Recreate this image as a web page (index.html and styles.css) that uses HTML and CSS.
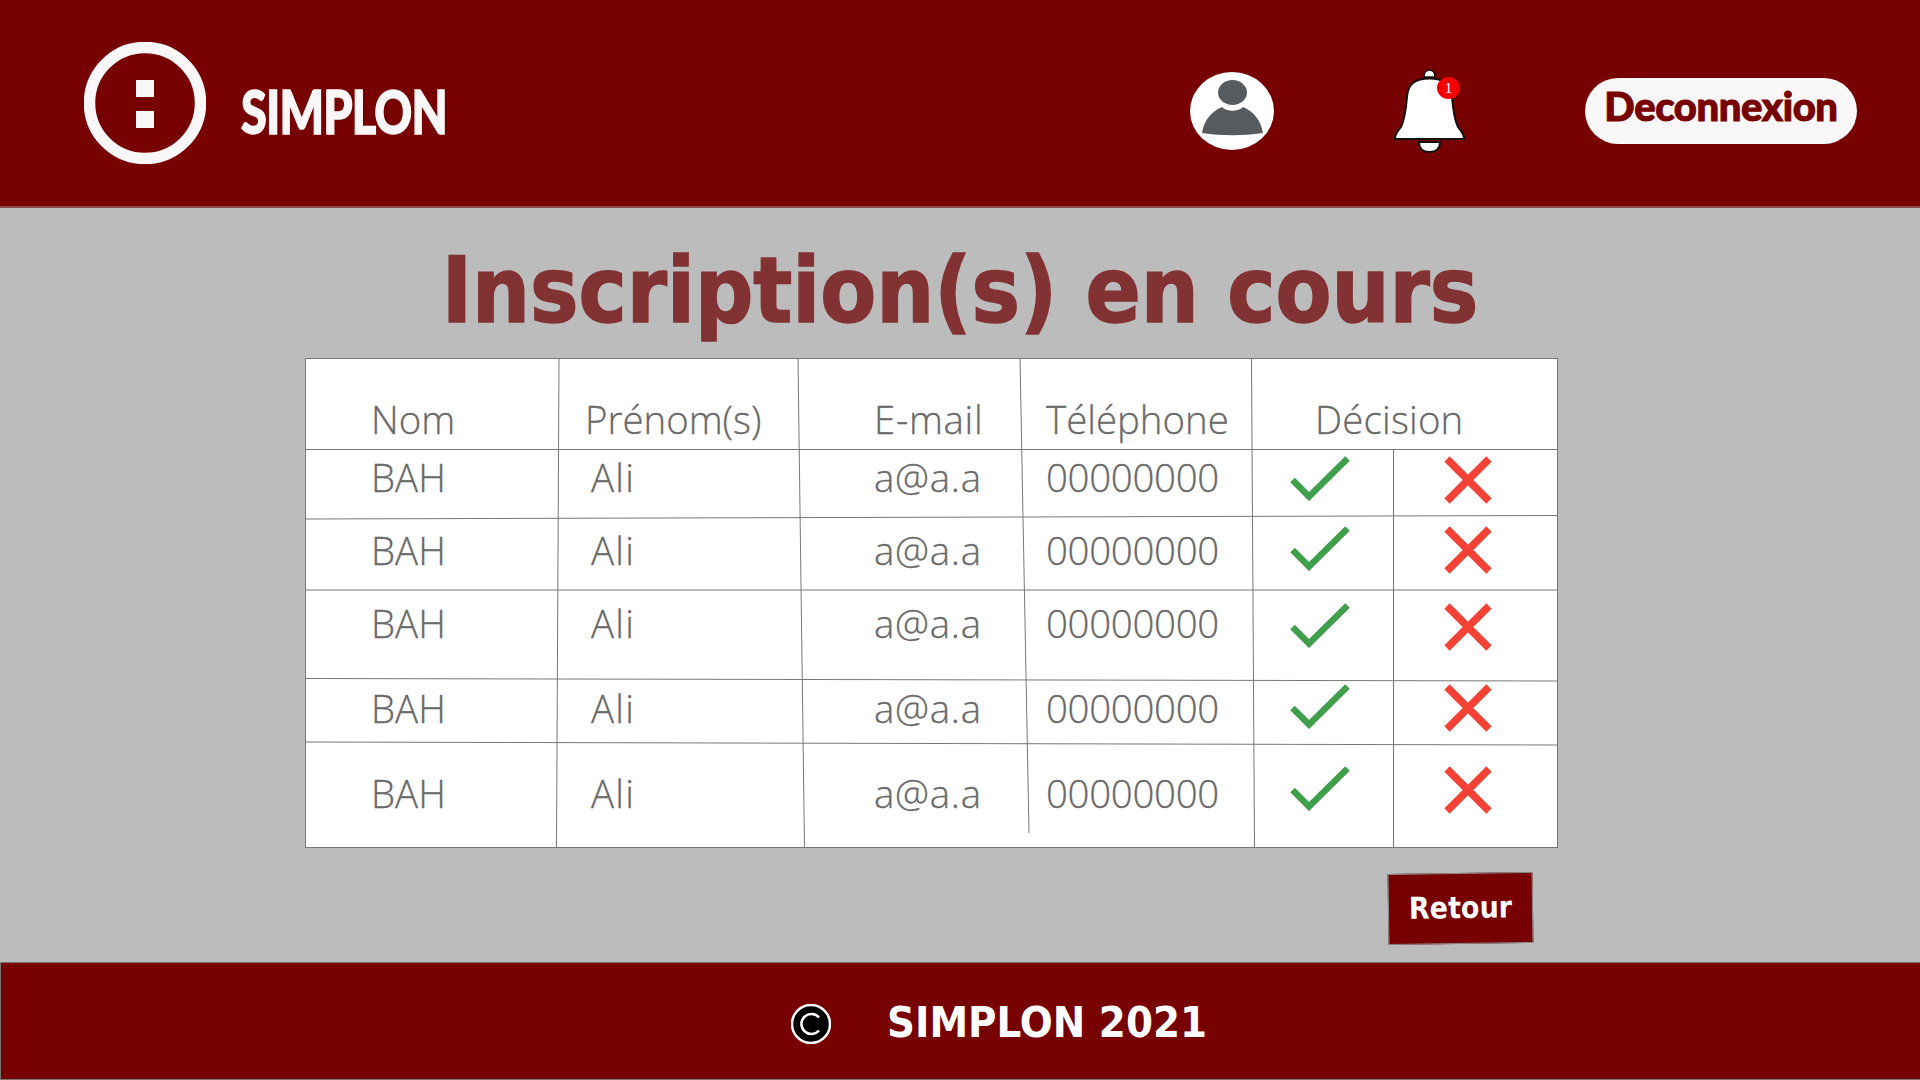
FILE: index.html
```html
<!DOCTYPE html>
<html lang="fr">
<head>
<meta charset="utf-8">
<title>Inscription(s) en cours</title>
<link rel="stylesheet" href="styles.css">
</head>
<body>
<svg class="defs" width="0" height="0" aria-hidden="true">
  <symbol id="ok" viewBox="0 0 60 45"><polyline points="2.5,24 19,40.5 57.5,2.5" fill="none" stroke="#3f9f4a" stroke-width="6.5"/></symbol>
  <symbol id="no" viewBox="0 0 48 48"><path d="M3 3 45 45M45 3 3 45" fill="none" stroke="#f44336" stroke-width="7.5"/></symbol>
</svg>
<header class="header">
  <div class="brand">
    <svg class="logo" viewBox="0 0 122 122"><circle cx="61" cy="61" r="55.5" fill="none" stroke="#f9f7f8" stroke-width="11.5"/><rect x="52" y="38" width="18" height="17" fill="#f9f7f8"/><rect x="52" y="69" width="18" height="17" fill="#f9f7f8"/></svg>
    <span class="brand-name">SIMPLON</span>
  </div>
  <div class="actions">
    <div class="avatar">
      <svg viewBox="0 0 84 78"><ellipse cx="42.5" cy="20.5" rx="14.5" ry="12.5" fill="#555b5e"/><path d="M12 61C14 48 22 39 32 35 37 40 48 40 53 35 63 39 71 48 73 61 52 64 32 64 12 61Z" fill="#555b5e"/></svg>
    </div>
    <div class="bell">
      <svg viewBox="0 0 71 84"><path d="M30 8C30 3 33 1 35.5 1S41 3 41 8Z" fill="#fff" stroke="#111" stroke-width="1.5"/><path d="M1 70C1 64 4 62 7 58 11 50 12 40 13 28 14 14 22 9.5 35.5 9.5S57 14 58 28C59 40 60 50 64 58 67 62 70 64 70 70Z" fill="#fff" stroke="#111" stroke-width="2"/><path d="M25 73H46C46 80 41 83 35.5 83S25 80 25 73Z" fill="#fff" stroke="#111" stroke-width="2"/></svg>
      <span class="badge">1</span>
    </div>
    <a class="logout">Deconnexion</a>
  </div>
</header>
<main class="main">
  <h1 class="title">Inscription(s) en cours</h1>
  <div class="board">
    <table class="grid">
      <colgroup><col class="c1"><col class="c2"><col class="c3"><col class="c4"><col class="c5"><col class="c6"></colgroup>
      <thead>
        <tr class="r0"><th class="nom">Nom</th><th class="pre">Prénom(s)</th><th class="mail">E-mail</th><th class="tel">Téléphone</th><th class="dec" colspan="2">Décision</th></tr>
      </thead>
      <tbody>
        <tr class="r1"><td class="nom">BAH</td><td class="ali">Ali</td><td class="mail">a@a.a</td><td class="tel num">00000000</td><td class="yes"><svg class="ok"><use href="#ok"/></svg></td><td class="nope"><svg class="no"><use href="#no"/></svg></td></tr>
        <tr class="r2"><td class="nom">BAH</td><td class="ali">Ali</td><td class="mail">a@a.a</td><td class="tel num">00000000</td><td class="yes"><svg class="ok"><use href="#ok"/></svg></td><td class="nope"><svg class="no"><use href="#no"/></svg></td></tr>
        <tr class="r3"><td class="nom">BAH</td><td class="ali">Ali</td><td class="mail">a@a.a</td><td class="tel num">00000000</td><td class="yes"><svg class="ok"><use href="#ok"/></svg></td><td class="nope"><svg class="no"><use href="#no"/></svg></td></tr>
        <tr class="r4"><td class="nom">BAH</td><td class="ali">Ali</td><td class="mail">a@a.a</td><td class="tel num">00000000</td><td class="yes"><svg class="ok"><use href="#ok"/></svg></td><td class="nope"><svg class="no"><use href="#no"/></svg></td></tr>
        <tr class="r5"><td class="nom">BAH</td><td class="ali">Ali</td><td class="mail">a@a.a</td><td class="tel num">00000000</td><td class="yes"><svg class="ok"><use href="#ok"/></svg></td><td class="nope"><svg class="no"><use href="#no"/></svg></td></tr>
      </tbody>
    </table>
    <svg class="rules" viewBox="0 0 1253 490" aria-hidden="true">
      <path d="M0 91.5H1253M0 161 L1253 157.5M0 232H1253M0 320.5 L1253 323M0 384 L1253 387"/>
      <path d="M254 0 251.5 490M493 0 499.5 490M715 0 724 475M946.5 0 949.5 490M1088.5 91.5V490"/>
    </svg>
  </div>
  <a class="back">Retour</a>
</main>
<footer class="footer">
  <svg class="copy" viewBox="0 0 40 40"><circle cx="20" cy="20" r="19" fill="#000" stroke="#fff" stroke-width="2.5"/><path d="M28 13.5A10 10 0 1 0 28 26.5" fill="none" stroke="#fff" stroke-width="2.5"/></svg>
  <span class="footer-text">SIMPLON 2021</span>
</footer>
</body>
</html>
```
FILE: styles.css
```css
* { box-sizing: border-box; }
html, body { margin: 0; height: 100%; }
body {
  width: 1920px;
  height: 1080px;
  overflow: hidden;
  display: flex;
  flex-direction: column;
  background: #bcbcbc;
  font-family: "Open Sans", sans-serif;
}
.defs { position: absolute; }

.header {
  height: 208px;
  flex: none;
  display: flex;
  justify-content: space-between;
  background: #770000;
  border-bottom: 2px solid #8c4a4a;
  padding: 42px 63px 0 84px;
}
.brand { display: flex; align-items: flex-start; gap: 35px; }
.logo { width: 122px; height: 122px; display: block; }
.brand-name {
  display: block;
  margin-top: 44px;
  width: 204px;
  font-family: "Lato", sans-serif;
  font-weight: 900;
  font-size: 60px;
  line-height: 50px;
  color: #f9f7f8;
  letter-spacing: -1px;
  white-space: nowrap;
  -webkit-text-stroke: 1.5px #f9f7f8;
  transform: scaleX(0.78);
  transform-origin: left center;
}
.actions { display: flex; align-items: center; height: 138px; }
.avatar { width: 84px; height: 78px; border-radius: 50%; background: #fff; }
.avatar svg { display: block; width: 84px; height: 78px; }
.bell { position: relative; width: 73px; height: 84px; margin-left: 119px; }
.bell svg { display: block; width: 73px; height: 84px; }
.badge {
  position: absolute;
  left: 44px;
  top: 8px;
  width: 23px;
  height: 22px;
  border-radius: 50%;
  background: #f40000;
  color: #fff;
  font: 15px/22px "Liberation Serif", serif;
  text-align: center;
}
.logout {
  margin-left: 119px;
  width: 272px;
  height: 66px;
  border-radius: 33px;
  background: #f9f7f8;
  color: #770000;
  font-family: "Lato", sans-serif;
  font-weight: 900;
  font-size: 40px;
  line-height: 56px;
  letter-spacing: -0.4px;
  -webkit-text-stroke: 1px #770000;
  text-align: center;
}

.main { flex: 1; display: flex; flex-direction: column; align-items: center; min-height: 0; }
.title {
  margin: 26px 0 0;
  height: 124px;
  font-family: "DejaVu Sans", sans-serif;
  font-stretch: condensed;
  font-weight: 700;
  font-size: 90.6px;
  line-height: 113px;
  color: #823232;
  white-space: nowrap;
  -webkit-text-stroke: 1.5px #823232;
}
.board {
  position: relative;
  align-self: flex-start;
  width: 1253px;
  height: 490px;
  margin-left: 305px;
  background: #fff;
  border: 1px solid #777;
}
.grid {
  width: 1253px;
  margin: -1px;
  table-layout: fixed;
  border-collapse: collapse;
  color: #6a6a6a;
  font-size: 38.4px;
  font-weight: 300;
  line-height: 50px;
  -webkit-text-stroke: 0.3px #6a6a6a;
}
.grid th, .grid td { padding: 0; text-align: left; vertical-align: top; font-weight: 300; white-space: nowrap; }
.c1 { width: 253px; } .c2 { width: 242px; } .c3 { width: 224px; } .c4 { width: 228px; } .c5 { width: 141px; } .c6 { width: 165px; }
.r0 { height: 91px; } .r1 { height: 69px; } .r2 { height: 72px; } .r3 { height: 88px; } .r4 { height: 64px; } .r5 { height: 106px; }
.grid th { padding-top: 36px; }
.grid .nom { padding-left: 66px; }
.grid .pre { padding-left: 27px; }
.grid .ali { padding-left: 33px; letter-spacing: 1.2px; }
.grid .mail { padding-left: 74px; letter-spacing: 0.7px; }
.grid .tel { padding-left: 22px; }
.grid .num { letter-spacing: -0.3px; }
.grid .dec { padding-left: 63px; letter-spacing: 0.2px; }
.grid .yes { padding-left: 38px; }
.grid .nope { padding-left: 51px; }
.r1 td { padding-top: 3px; }
.r2 td { padding-top: 7px; }
.r3 td { padding-top: 8px; }
.r4 td { padding-top: 5px; }
.r5 td { padding-top: 26px; }
.ok { display: block; width: 60px; height: 45px; }
.no { display: block; width: 48px; height: 48px; }
.r1 .yes, .r1 .nope { padding-top: 7px; }
.r2 .yes, .r2 .nope { padding-top: 8px; }
.r3 .yes, .r3 .nope { padding-top: 13px; }
.r4 .yes, .r4 .nope { padding-top: 6px; }
.r5 .yes, .r5 .nope { padding-top: 24px; }
.rules { position: absolute; left: -1px; top: -1px; width: 1253px; height: 490px; pointer-events: none; }
.rules path { fill: none; stroke: #777; stroke-width: 1; }
.back {
  align-self: flex-end;
  margin: 25px 387px 0 0;
  width: 145px;
  height: 71px;
  background: #770000;
  border: 1px solid #8a8a8a;
  color: #fff;
  font-family: "DejaVu Sans", sans-serif;
  font-stretch: condensed;
  font-weight: 700;
  font-size: 30px;
  line-height: 67px;
  text-align: center;
  transform: rotate(-0.8deg);
}

.footer {
  height: 118px;
  flex: none;
  display: flex;
  align-items: center;
  background: #770000;
  border: 1px solid #777;
  border-width: 1px 0 1px 1px;
  padding-left: 790px;
  gap: 56px;
}
.copy { width: 40px; height: 40px; display: block; margin-top: 6px; }
.footer-text {
  margin-top: 2px;
  font-family: "DejaVu Sans", sans-serif;
  font-stretch: condensed;
  font-weight: 700;
  font-size: 43.2px;
  line-height: 50px;
  color: #fff;
  white-space: nowrap;
}
```
